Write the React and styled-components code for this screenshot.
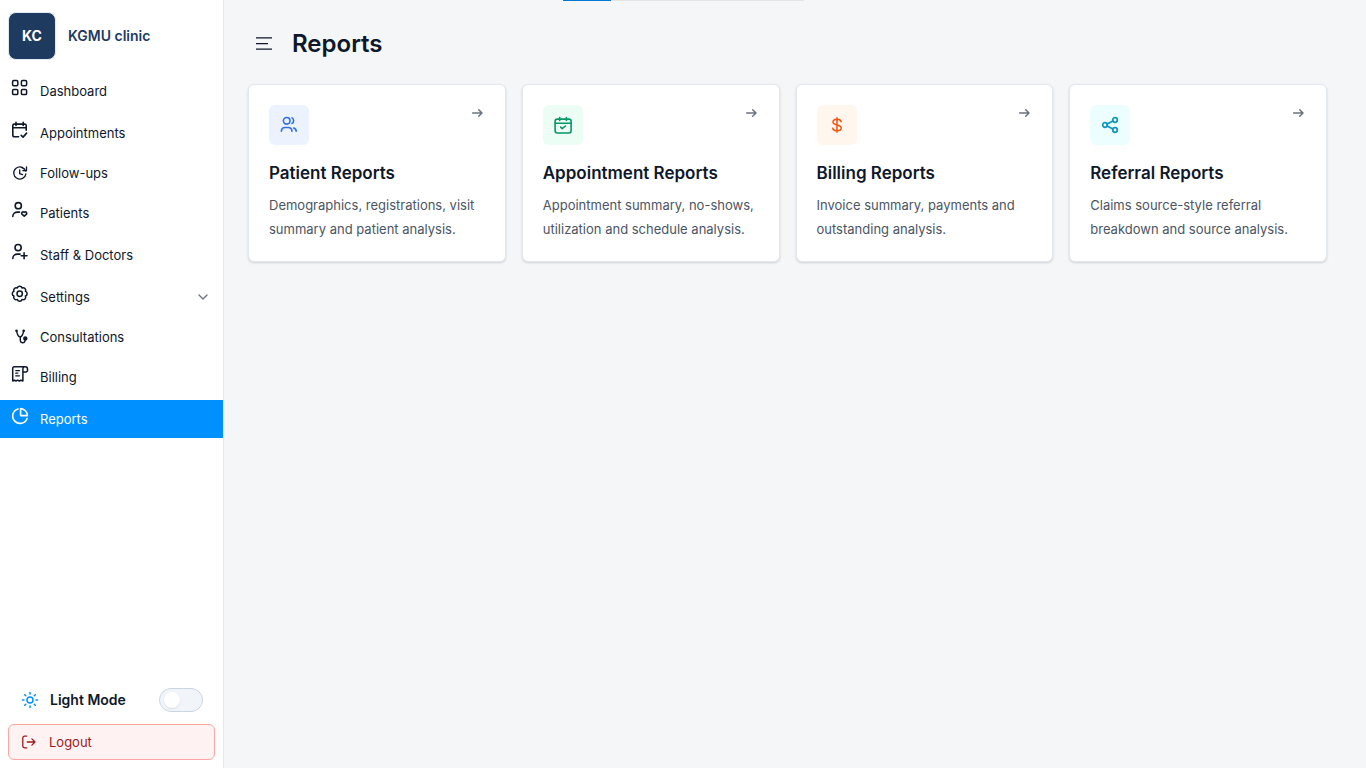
import styled, { createGlobalStyle } from "styled-components";
import React, { useState } from "react";
import { LuSun } from "react-icons/lu";
import { FiChevronDown } from "react-icons/fi";

const GlobalStyle = createGlobalStyle`
  * {
    box-sizing: border-box;
  }
  body {
    margin: 0;
    font-family: Inter, "Liberation Sans", sans-serif;
    background-color: #f4f6f8;
  }
`;

const Layout = styled.div`
  display: flex;
  height: 100vh;
  overflow: hidden;
`;

const Sidebar = styled.aside`
  width: 224px;
  flex-shrink: 0;
  display: flex;
  flex-direction: column;
  background-color: white;
  border-right: 1px solid #e5e7eb;
`;

const Brand = styled.div`
  display: flex;
  align-items: center;
  gap: 12px;
  height: 72px;
  padding: 0 8px;
`;

const Logo = styled.div`
  width: 48px;
  height: 48px;
  display: flex;
  align-items: center;
  justify-content: center;
  border: 1px solid #e2e8f0;
  border-radius: 8px;
  background-color: #1e3a5f;
  color: white;
  font-size: 14px;
  font-weight: 700;
  line-height: 20px;
  padding-bottom: 1px;
`;

const BrandName = styled.span`
  padding-bottom: 2px;
  color: #1e3a5f;
  font-size: 14px;
  font-weight: 600;
`;

const Nav = styled.nav`
  flex: 1;
  display: flex;
  flex-direction: column;
  gap: 4px;
`;

const NavItem = styled.a`
  display: flex;
  align-items: center;
  height: ${(props) => (props.$small ? "34px" : "38px")};
  padding: 0 12px 0 10px;
  background-color: ${(props) => (props.$active ? "#0090ff" : "transparent")};
  color: ${(props) => (props.$active ? "white" : "#0f172a")};
  font-size: 13px;
  cursor: pointer;
`;

const NavIcon = styled.span`
  width: 20px;
  display: flex;
  margin-right: 10px;
  padding-bottom: ${(props) => (props.$small ? "0" : "6px")};
`;

const NavLabel = styled.span`
  flex: 1;
`;

const SidebarFooter = styled.div`
  display: flex;
  flex-direction: column;
  gap: 12px;
  padding: 8px;
`;

const ThemeRow = styled.div`
  display: flex;
  align-items: center;
  gap: 11px;
  padding: 0 12px 0 13px;
  height: 24px;
  color: #0f172a;
  font-size: 14px;
  font-weight: 600;
`;

const ThemeLabel = styled.span`
  padding-bottom: 1px;
`;

const Switch = styled.button`
  width: 44px;
  height: 24px;
  margin-left: auto;
  display: flex;
  align-items: center;
  justify-content: ${(props) => (props.$on ? "flex-end" : "flex-start")};
  padding: 0 4px;
  border: 1px solid #cbd5e1;
  border-radius: 12px;
  background-color: #f1f5f9;
  cursor: pointer;
`;

const Knob = styled.span`
  width: 16px;
  height: 16px;
  border-radius: 50%;
  background-color: white;
  box-shadow: 0 1px 2px rgba(0, 0, 0, 0.1);
`;

const LogoutButton = styled.button`
  display: flex;
  align-items: center;
  gap: 12px;
  height: 36px;
  padding: 0 12px;
  border: 1px solid #fca5a5;
  border-radius: 6px;
  background-color: #fef2f2;
  color: #991b1b;
  font-family: inherit;
  font-size: 13px;
  cursor: pointer;
`;

const Main = styled.main`
  flex: 1;
  display: flex;
  flex-direction: column;
`;

const Progress = styled.div`
  width: 241px;
  height: 1px;
  margin-left: 339px;
  background-color: #e5e5e5;
`;

const ProgressBar = styled.div`
  width: 48px;
  height: 1px;
  background-color: #0078d4;
`;

const Header = styled.header`
  display: flex;
  align-items: center;
  gap: 20px;
  height: 84px;
  padding: 0 32px;
`;

const Title = styled.h1`
  margin: 0;
  color: #0f172a;
  font-size: 24px;
  font-weight: 600;
`;

const Cards = styled.div`
  display: grid;
  grid-template-columns: repeat(4, 1fr);
  gap: 16px;
  padding: 0 39px 0 24px;
  margin-top: -1px;
`;

const Card = styled.div`
  height: 178px;
  padding: 20px;
  border: 1px solid #e2e8f0;
  border-radius: 6px;
  background-color: white;
  box-shadow: 0 1px 3px rgba(0, 0, 0, 0.1), 0 1px 2px rgba(0, 0, 0, 0.06);
`;

const CardTop = styled.div`
  display: flex;
  justify-content: space-between;
`;

const IconBox = styled.div`
  width: 40px;
  height: 40px;
  display: flex;
  align-items: center;
  justify-content: center;
  border-radius: 6px;
  background-color: ${(props) => props.$bg};
  color: ${(props) => props.$color};
`;

const CardTitle = styled.h2`
  margin: 16px 0 8px;
  color: #0f172a;
  font-size: 17px;
  font-weight: 600;
  line-height: 24px;
`;

const CardText = styled.p`
  margin: 0;
  color: #4b5563;
  font-size: 13px;
  line-height: 24px;
`;

const Svg = styled.svg`
  flex-shrink: 0;
  fill: none;
  stroke: currentColor;
  stroke-linecap: round;
  stroke-linejoin: round;
`;

const Icon = ({ size = 20, stroke = 1.6, children }) => (
  <Svg width={size} height={size} viewBox={`0 0 ${size} ${size}`} strokeWidth={stroke}>
    {children}
  </Svg>
);

const MenuIcon = () => (
  <svg width="16" height="14" viewBox="0 0 16 14" stroke="#0f172a" strokeWidth="1.4">
    <path d="M0 1.9h16M0 7.6h12M0 13.1h16" />
  </svg>
);

const DashboardIcon = () => (
  <Icon stroke={1.5}>
    <rect x="2.6" y="2.6" width="5.2" height="5.2" rx="1.2" />
    <rect x="11.4" y="2.6" width="5.2" height="5.2" rx="1.2" />
    <rect x="2.6" y="11.4" width="5.2" height="5.2" rx="1.2" />
    <rect x="11.4" y="11.4" width="5.2" height="5.2" rx="1.2" />
  </Icon>
);

const AppointmentIcon = () => (
  <Icon>
    <path d="M8.6 16.8H4.6a1.8 1.8 0 0 1-1.8-1.8V5.6a1.5 1.5 0 0 1 1.5-1.5h10.4a1.5 1.5 0 0 1 1.5 1.5v4.6M2.8 7.8h13.4M6 2.4v3M13.2 2.4v3M11.2 15.3l1.9 1.8 3.5-4" />
  </Icon>
);

const FollowUpIcon = () => (
  <Icon stroke={1.3}>
    <path d="M15.7 8.2A6.1 6.1 0 1 0 15.9 10.8M16.5 3.8v3.9h-3.6M13.9 5.9A6.1 6.1 0 0 0 11 4.4M9.7 7v3.7l2.9 1" />
  </Icon>
);

const PatientIcon = () => (
  <Icon>
    <circle cx="8.3" cy="5.7" r="3.1" />
    <path d="M2.8 16.4c0-2.7 2-4.3 4.7-4.3h2M14.2 16.2l-2.3-2a1.5 1.5 0 0 1 2.3-1.9 1.5 1.5 0 0 1 2.3 1.9z" />
  </Icon>
);

const StaffIcon = () => (
  <Icon>
    <circle cx="8.1" cy="5.6" r="3.1" />
    <path d="M2.8 16.4c0-2.7 2-4.3 4.7-4.3h2.6M14.1 10.9v5.8M11.2 13.8H17" />
  </Icon>
);

// eight rounded lobes around the hub
const gearPath = () => {
  const points = Array.from({ length: 8 }, (_, i) => {
    const a = ((22.5 + 45 * i) * Math.PI) / 180;
    return `${(9.7 + 6.2 * Math.cos(a)).toFixed(2)} ${(9.7 + 6.2 * Math.sin(a)).toFixed(2)}`;
  });
  return `M${points[7]}` + points.map((p) => `A2.5 2.5 0 0 1 ${p}`).join("") + "Z";
};

const SettingsIcon = () => (
  <Icon stroke={1.5}>
    <path d={gearPath()} />
    <circle cx="9.7" cy="9.7" r="2.7" />
  </Icon>
);

const ConsultationIcon = () => (
  <Icon stroke={1.4}>
    <path d="M6.6 3.8c.4 2.9 1.5 5.4 3.5 6.3 2-.9 3.1-3.4 3.5-6.3M10.3 10.2v3.4a2.4 2.4 0 0 0 4.7.4l.3-2.4" />
    <circle cx="6.5" cy="3.7" r=".6" fill="currentColor" />
    <circle cx="13.7" cy="3.7" r=".6" fill="currentColor" />
    <circle cx="15.3" cy="11.4" r="1.5" fill="currentColor" />
  </Icon>
);

const BillingIcon = () => (
  <Icon stroke={1.5}>
    <path d="M12.9 7.9V17l-2-.8-1.7.8-1.6-.8-1.6.8-1.5-.8-1.8.8V4.3a1.5 1.5 0 0 1 1.5-1.5h11a2.3 2.3 0 0 1 2.3 2.3v1.3a1.5 1.5 0 0 1-1.5 1.5zM12.9 7.9V5a2 2 0 0 1 1.3-2.1" />
    <path d="M5.8 6.6h3.8M5.8 9.2h2M5.8 11.8h3.6" strokeWidth="1.3" />
  </Icon>
);

const ReportIcon = () => (
  <Icon>
    <path d="M7.9 2.9a7.4 7.4 0 1 0 9.2 9.5" />
    <path d="M10.6 2.6a7.1 7.1 0 0 1 6.8 7h-6.8z" />
  </Icon>
);

const UsersIcon = () => (
  <Icon>
    <circle cx="7.7" cy="5.8" r="3.3" />
    <path d="M2.4 16.2c0-2.6 1.5-3.7 3.8-3.7h2.9c2.3 0 3.8 1.1 3.8 3.7M14.7 13c1.7.5 2.5 1.5 2.5 3.2M13 2.9a3.2 3.2 0 0 1 0 5.6" />
  </Icon>
);

const CalendarIcon = () => (
  <Icon>
    <rect x="2.1" y="4.1" width="16" height="13.9" rx="2.2" />
    <path d="M2.1 8.3h16M6.7 2.5v3M13.4 2.5v3M7.6 12.1l1.6 1.5 3.2-2.6" />
  </Icon>
);

const DollarIcon = () => (
  <Icon stroke={1.5}>
    <path d="M14.1 6.7C13.8 5 12.2 4.2 10 4.2c-2.4 0-4 1-4 2.8 0 4.2 8.2 1.6 8.2 6 0 1.8-1.7 2.8-4.2 2.8-2.4 0-4-.9-4.2-2.6M10 2.7v14.6" />
  </Icon>
);

const ShareIcon = () => (
  <Icon stroke={1.7}>
    <circle cx="5" cy="10" r="2.3" />
    <circle cx="15" cy="5" r="2.3" />
    <circle cx="15" cy="15" r="2.3" />
    <path d="M7.1 9l5.8-3M7.1 11l5.8 3" />
  </Icon>
);

const ArrowIcon = () => (
  <Icon size={16} stroke={1.5}>
    <path d="M3.7 8h9.3M9.7 4.7L13 8l-3.3 3.3" />
  </Icon>
);

const LogoutIcon = () => (
  <Icon size={16} stroke={1.3}>
    <path d="M5.8 2.1H3.6A1.8 1.8 0 0 0 1.8 3.9v8.2a1.8 1.8 0 0 0 1.8 1.8h2.2M6.2 8h7.8M10.9 4.9L14 8l-3.1 3.1" />
  </Icon>
);

const ArrowWrap = styled.span`
  height: 16px;
  color: #6b7280;
`;

const navItems = [
  { label: "Dashboard", icon: <DashboardIcon /> },
  { label: "Appointments", icon: <AppointmentIcon /> },
  { label: "Follow-ups", icon: <FollowUpIcon />, small: true },
  { label: "Patients", icon: <PatientIcon /> },
  { label: "Staff & Doctors", icon: <StaffIcon /> },
  { label: "Settings", icon: <SettingsIcon />, chevron: true },
  { label: "Consultations", icon: <ConsultationIcon />, small: true },
  { label: "Billing", icon: <BillingIcon /> },
  { label: "Reports", icon: <ReportIcon />, active: true },
];

const reports = [
  {
    title: "Patient Reports",
    text: "Demographics, registrations, visit summary and patient analysis.",
    icon: <UsersIcon />,
    bg: "#ecf3ff",
    color: "#2f6fe4",
  },
  {
    title: "Appointment Reports",
    text: "Appointment summary, no-shows, utilization and schedule analysis.",
    icon: <CalendarIcon />,
    bg: "#ecfdf5",
    color: "#059669",
  },
  {
    title: "Billing Reports",
    text: "Invoice summary, payments and outstanding analysis.",
    icon: <DollarIcon />,
    bg: "#fff6ed",
    color: "#f4510b",
  },
  {
    title: "Referral Reports",
    text: "Claims source-style referral breakdown and source analysis.",
    icon: <ShareIcon />,
    bg: "#ecfeff",
    color: "#0e96bd",
  },
];

const App = () => {
  const [dark, setDark] = useState(false);

  return (
    <>
      <GlobalStyle />
      <Layout>
        <Sidebar>
          <Brand>
            <Logo>KC</Logo>
            <BrandName>KGMU clinic</BrandName>
          </Brand>
          <Nav>
            {navItems.map((item) => (
              <NavItem key={item.label} $small={item.small} $active={item.active}>
                <NavIcon $small={item.small}>{item.icon}</NavIcon>
                <NavLabel>{item.label}</NavLabel>
                {item.chevron && <FiChevronDown size={16} color="#6b7280" />}
              </NavItem>
            ))}
          </Nav>
          <SidebarFooter>
            <ThemeRow>
              <LuSun size={18} color="#0090ff" />
              <ThemeLabel>Light Mode</ThemeLabel>
              <Switch $on={dark} onClick={() => setDark(!dark)}>
                <Knob />
              </Switch>
            </ThemeRow>
            <LogoutButton>
              <LogoutIcon />
              Logout
            </LogoutButton>
          </SidebarFooter>
        </Sidebar>
        <Main>
          <Progress>
            <ProgressBar />
          </Progress>
          <Header>
            <MenuIcon />
            <Title>Reports</Title>
          </Header>
          <Cards>
            {reports.map((report) => (
              <Card key={report.title}>
                <CardTop>
                  <IconBox $bg={report.bg} $color={report.color}>
                    {report.icon}
                  </IconBox>
                  <ArrowWrap>
                    <ArrowIcon />
                  </ArrowWrap>
                </CardTop>
                <CardTitle>{report.title}</CardTitle>
                <CardText>{report.text}</CardText>
              </Card>
            ))}
          </Cards>
        </Main>
      </Layout>
    </>
  );
};

export default App;
